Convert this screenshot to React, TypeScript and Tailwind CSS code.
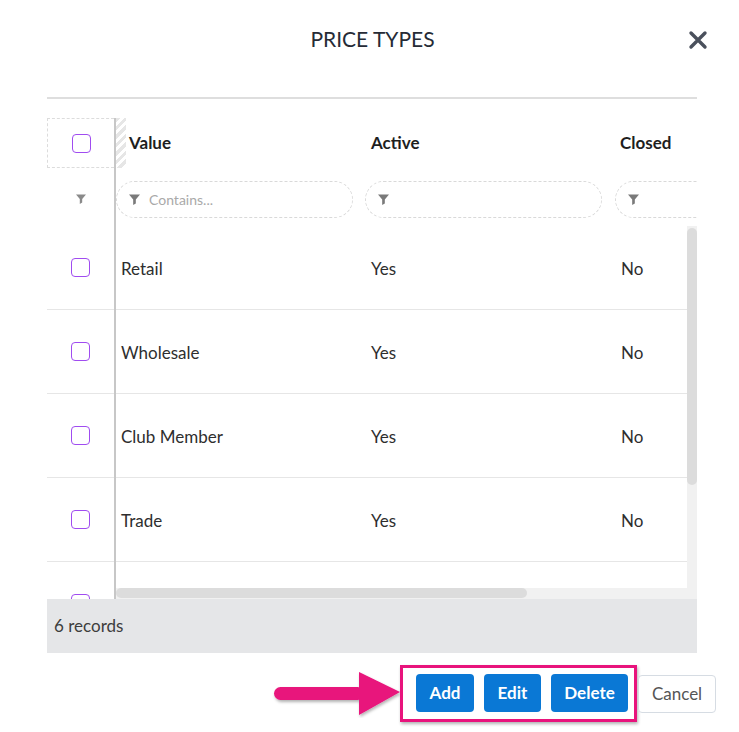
import React from "react";

const rows = [
  { value: "Retail", active: "Yes", closed: "No" },
  { value: "Wholesale", active: "Yes", closed: "No" },
  { value: "Club Member", active: "Yes", closed: "No" },
  { value: "Trade", active: "Yes", closed: "No" },
  { value: "", active: "", closed: "" },
];

function Funnel({ className = "" }: { className?: string }) {
  return (
    <svg viewBox="0 0 10 10" className={className} fill="currentColor">
      <path d="M0 0.5h10L6.2 5v3.6L3.8 10V5z" />
    </svg>
  );
}

function Checkbox() {
  return <div className="w-[19px] h-[19px] rounded-[4px] border-[1.5px] border-[#a04cf0] bg-white" />;
}

function FilterBox({ placeholder }: { placeholder?: string }) {
  return (
    <div className="w-[237px] h-[37px] shrink-0 rounded-full border border-dashed border-[#d9d9d9] flex items-center pl-[12px] gap-[9px]">
      <Funnel className="w-[11px] h-[11px] text-[#7a7a7a]" />
      {placeholder && <span className="text-[14px] text-[#a9a9a9]">{placeholder}</span>}
    </div>
  );
}

export default function App() {
  return (
    <div className="w-[739px] h-[732px] bg-white overflow-hidden font-['Lato','Liberation_Sans',sans-serif] text-[#333]">
      {/* Header */}
      <div className="h-[97px] flex items-start pt-[25px] pl-[37px] pr-[31px]">
        <div className="w-[20px]" />
        <h1 className="flex-1 text-center text-[21px] leading-[28px] text-[#262b36]">PRICE TYPES</h1>
        <svg viewBox="0 0 20 20" className="w-[20px] h-[20px] mt-[5px] text-[#4a505c]" stroke="currentColor" strokeWidth="3.4" strokeLinecap="round">
          <path d="M3 3L17 17M17 3L3 17" />
        </svg>
      </div>
      <div className="ml-[47px] w-[650px] border-t-2 border-[#dedede]" />

      {/* Grid */}
      <div className="ml-[47px] mt-[19px] w-[650px]">
        <div className="flex h-[481px]">
          {/* Fixed checkbox column */}
          <div className="w-[67px] shrink-0 flex flex-col">
            <div className="h-[50px] border border-dashed border-[#dcdcdc] border-r-0 flex items-center justify-center">
              <Checkbox />
            </div>
            <div className="h-[58px] flex items-center justify-center pt-[4px]">
              <Funnel className="w-[10px] h-[10px] text-[#8a8a8a]" />
            </div>
            <div className="flex-1 overflow-hidden">
              {rows.map((r, i) => (
                <div key={i} className="h-[84px] border-b border-[#e6e6e6] flex items-center justify-center">
                  <Checkbox />
                </div>
              ))}
            </div>
          </div>

          {/* Divider */}
          <div className="w-[2px] bg-[#c7c7c7] shrink-0" />

          {/* Scrollable area */}
          <div className="flex-1 min-w-0 flex flex-col overflow-hidden">
            <div className="h-[50px] flex shrink-0">
              <div className="w-[249px] shrink-0 flex items-center">
                <div className="w-[10px] h-full bg-[repeating-linear-gradient(135deg,#e6e6e6_0px,#e6e6e6_3px,transparent_3px,transparent_6px)]" />
                <span className="pl-[3px] text-[17px] font-bold text-[#1e1e1e]">Value</span>
              </div>
              <div className="w-[250px] shrink-0 flex items-center pl-[6px] text-[17px] font-bold text-[#1e1e1e]">Active</div>
              <div className="w-[250px] shrink-0 flex items-center pl-[5px] text-[17px] font-bold text-[#1e1e1e]">Closed</div>
            </div>
            <div className="h-[58px] flex items-center shrink-0 pt-[4px]">
              <div className="w-[249px] shrink-0">
                <FilterBox placeholder="Contains..." />
              </div>
              <div className="w-[250px] shrink-0">
                <FilterBox />
              </div>
              <div className="w-[250px] shrink-0">
                <FilterBox />
              </div>
            </div>
            <div className="flex-1 flex min-h-0">
              <div className="flex-1 min-w-0 flex flex-col">
                <div className="flex-1 overflow-hidden">
                  {rows.map((r, i) => (
                    <div key={i} className="h-[84px] w-[749px] border-b border-[#e6e6e6] flex items-center text-[17px] text-[#2e2e2e] pt-[2px]">
                      <div className="w-[249px] shrink-0 pl-[5px]">{r.value}</div>
                      <div className="w-[250px] shrink-0 pl-[6px]">{r.active}</div>
                      <div className="w-[250px] shrink-0 pl-[6px]">{r.closed}</div>
                    </div>
                  ))}
                </div>
                <div className="h-[11px] shrink-0 bg-[#f1f1f1] pb-[1px]">
                  <div className="w-[411px] h-full bg-[#dcdcdc] rounded-full" />
                </div>
              </div>
              <div className="w-[10px] shrink-0 bg-[#f1f1f1] pt-[2px]">
                <div className="h-[257px] bg-[#dcdcdc] rounded-full" />
              </div>
            </div>
          </div>
        </div>

        {/* Footer */}
        <div className="h-[54px] bg-[#e5e6e8] flex items-center pl-[7px] text-[17px] text-[#3d3d3d]">6 records</div>
      </div>

      {/* Actions */}
      <div className="mt-[12px] flex items-center justify-end pr-[23px]">
        <svg viewBox="0 0 132 48" className="w-[132px] h-[48px] mr-[-2px]">
          <defs>
            <filter id="sh" x="-10%" y="-20%" width="130%" height="150%">
              <feDropShadow dx="1" dy="2" stdDeviation="1.5" floodColor="#000" floodOpacity="0.3" />
            </filter>
          </defs>
          <g filter="url(#sh)" fill="#e8137c">
            <rect x="4" y="17" width="90" height="13" rx="6.5" />
            <path d="M89 2L130 22L89 45z" />
          </g>
        </svg>
        <div className="border-[3px] border-[#e8137c] pl-[13px] pr-[6px] pt-[6px] pb-[7px] flex gap-[10px] shadow-[1px_2px_3px_rgba(0,0,0,0.3)]">
          <button className="h-[38px] w-[58px] rounded-[4px] bg-[#0a78d5] text-white text-[17px] font-bold">Add</button>
          <button className="h-[38px] w-[57px] rounded-[4px] bg-[#0a78d5] text-white text-[17px] font-bold">Edit</button>
          <button className="h-[38px] w-[77px] rounded-[4px] bg-[#0a78d5] text-white text-[17px] font-bold">Delete</button>
        </div>
        <button className="ml-[1px] h-[38px] w-[78px] rounded-[4px] border border-[#d6dce3] bg-white text-[17px] text-[#555]">Cancel</button>
      </div>
    </div>
  );
}
